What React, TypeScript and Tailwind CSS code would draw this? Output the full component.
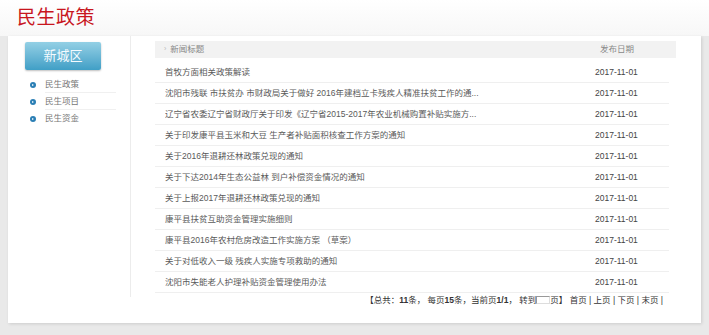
import React from 'react';

const font = { fontFamily: '"Liberation Sans", "Noto Sans CJK SC", sans-serif' };

const news: string[] = [
  '首牧方面相关政策解读',
  '沈阳市残联 市扶贫办 市财政局关于做好 2016年建档立卡残疾人精准扶贫工作的通...',
  '辽宁省农委辽宁省财政厅关于印发《辽宁省2015-2017年农业机械购置补贴实施方...',
  '关于印发康平县玉米和大豆 生产者补贴面积核查工作方案的通知',
  '关于2016年退耕还林政策兑现的通知',
  '关于下达2014年生态公益林 到户补偿资金情况的通知',
  '关于上报2017年退耕还林政策兑现的通知',
  '康平县扶贫互助资金管理实施细则',
  '康平县2016年农村危房改造工作实施方案 （草案）',
  '关于对低收入一级 残疾人实施专项救助的通知',
  '沈阳市失能老人护理补贴资金管理使用办法',
];

const menu = ['民生政策', '民生项目', '民生资金'];

export default function App() {
  return (
    <div className="w-[709px] h-[335px] overflow-hidden bg-[#e9e9e9] flex flex-col" style={font}>
      {/* Header strip */}
      <div className="h-[36px] shrink-0 bg-gradient-to-b from-white to-[#f7f7f7] pl-[17px] pt-[5px]">
        <h1 className="text-[19px] leading-[26px] text-[#c8161e] tracking-[0.5px]">民生政策</h1>
      </div>

      {/* White panel */}
      <div className="ml-[8px] mr-[8px] h-[287px] bg-white shadow-[1px_1px_3px_rgba(0,0,0,0.12)] flex">
        {/* Sidebar */}
        <div className="w-[123px] shrink-0 border-r border-[#ececec] h-[261px] pt-[6px] pl-[17px]">
          <div className="w-[76px] h-[28px] rounded-[2px] bg-gradient-to-b from-[#93d0e5] to-[#3f9fc6] shadow-[0_1px_2px_rgba(0,0,0,0.25)] flex items-center justify-center text-[#f4fbff] text-[13px]">
            新城区
          </div>
          <ul className="mt-[6px]">
            {menu.map((m, i) => (
              <li key={m} className="flex items-center h-[17px] text-[8.5px] text-[#777]">
                <span className="ml-[5px] w-[6px] h-[6px] rounded-full bg-[#2b7fb5] flex items-center justify-center">
                  <span className="block w-0 h-0 border-y-[1.5px] border-y-transparent border-l-[2px] border-l-white ml-[0.5px]" />
                </span>
                <span className={`ml-[9px] flex-1 mr-[14px] h-full flex items-center ${i < menu.length - 1 ? 'border-b border-[#f0f0f0]' : ''}`}>
                  {m}
                </span>
              </li>
            ))}
          </ul>
        </div>

        {/* Main list */}
        <div className="flex-1 pl-[24px] pt-[5px] pr-[25px]">
          <div className="h-[17px] bg-[#f2f2f2] flex items-center text-[8.5px] text-[#888]">
            <span className="ml-[9px] text-[#bbb] text-[7px]">›</span>
            <span className="ml-[4px] flex-1">新闻标题</span>
            <span className="w-[76px]">发布日期</span>
          </div>
          <div className="mt-[4px] pr-[7px]">
            {news.map((n, i) => (
              <div key={i} className="h-[21px] flex items-center border-b border-[#efefef] text-[8.5px] text-[#5a5a5a]">
                <span className="ml-[10px] flex-1 truncate">{n}</span>
                <span className="w-[74px] text-[#444]">2017-11-01</span>
              </div>
            ))}
          </div>
          <div className="h-[14px] flex items-center justify-end pr-[13px] text-[8.5px] text-[#333]">
            <span>【总共：<b>11</b>条， 每页<b>15</b>条，当前页<b>1/1</b>， 转到</span>
            <span className="inline-block w-[14px] h-[8px] border-t border-l border-[#999] border-r border-b border-r-[#ddd] border-b-[#ddd]" />
            <span>页】 首页 | 上页 | 下页 | 末页 |</span>
          </div>
        </div>
      </div>
    </div>
  );
}
